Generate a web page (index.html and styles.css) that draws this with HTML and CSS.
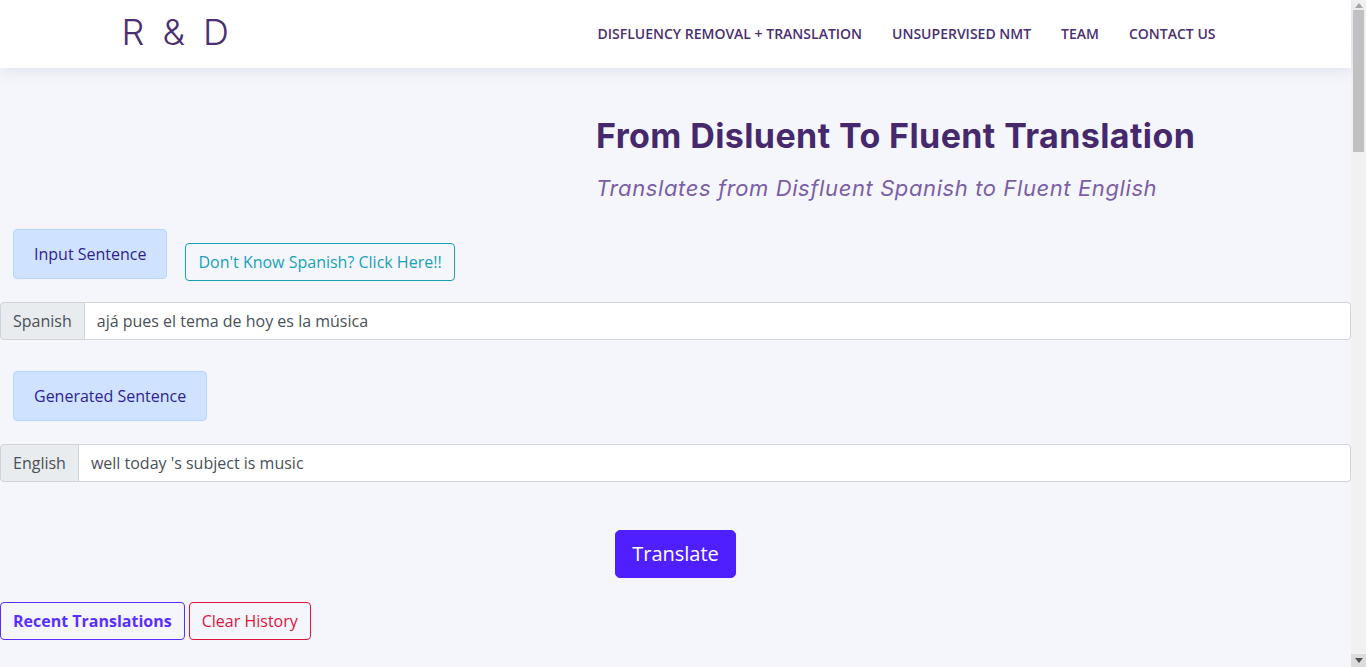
FILE: index.html
```html
<!DOCTYPE html>
<html lang="en">
<head>
<meta charset="utf-8">
<title>R &amp; D</title>
<link rel="stylesheet" href="styles.css">
</head>
<body>
<div class="app">
  <div class="site">
    <header class="topbar">
      <div class="topbar-inner">
        <a class="logo" href="#">R &amp; D</a>
        <nav class="nav">
          <a href="#">Disfluency Removal + Translation</a>
          <a href="#">Unsupervised NMT</a>
          <a href="#">Team</a>
          <a href="#">Contact Us</a>
        </nav>
      </div>
    </header>
    <main class="page">
      <section class="hero">
        <h1 class="hero-title">From Disluent To Fluent Translation</h1>
        <p class="hero-sub">Translates from Disfluent Spanish to Fluent English</p>
      </section>

      <div class="label-row">
        <span class="tag">Input Sentence</span>
        <button class="btn btn-info">Don't Know Spanish? Click Here!!</button>
      </div>
      <div class="input-group">
        <span class="prepend">Spanish</span>
        <input class="field" type="text" value="ajá pues el tema de hoy es la música">
      </div>

      <div class="label-row gen-row">
        <span class="tag">Generated Sentence</span>
      </div>
      <div class="input-group">
        <span class="prepend">English</span>
        <input class="field" type="text" value="well today 's subject is music">
      </div>

      <div class="translate-row">
        <button class="btn-translate">Translate</button>
      </div>

      <div class="history-bar">
        <button class="btn btn-recent">Recent Translations</button>
        <button class="btn btn-clear">Clear History</button>
      </div>
      <section class="history"></section>
    </main>
  </div>
  <div class="scrollbar" aria-hidden="true">
    <div class="sb-btn sb-up">
      <svg width="8" height="5" viewBox="0 0 8 5"><polygon points="4,0 8,5 0,5" fill="#a3a3a3"/></svg>
    </div>
    <div class="sb-track"><div class="sb-thumb"></div></div>
    <div class="sb-btn sb-down">
      <svg width="8" height="5" viewBox="0 0 8 5"><polygon points="0,0 8,0 4,5" fill="#505050"/></svg>
    </div>
  </div>
</div>
</body>
</html>
```

FILE: styles.css
```css
* { box-sizing: border-box; }
html, body { margin: 0; padding: 0; }
body {
  background: #f5f6fb;
  font-family: "Open Sans", "Liberation Sans", sans-serif;
  color: #495057;
}
.app { display: flex; align-items: flex-start; }
.site { flex: 1; min-width: 0; }

/* browser-like scrollbar */
.scrollbar {
  width: 15px;
  height: 100vh;
  position: sticky;
  top: 0;
  background: #f1f1f1;
  display: flex;
  flex-direction: column;
}
.sb-btn {
  height: 10px;
  display: flex;
  justify-content: center;
  align-items: center;
}
.sb-up { align-items: flex-start; padding-top: 3px; }
.sb-down { height: 13px; background: #dcdcdc; }
.sb-track { flex: 1; padding: 0 2px; }
.sb-thumb { height: 142px; background: #c1c1c1; }

.topbar {
  background: #fff;
  height: 68px;
  box-shadow: 0 2px 14px rgba(190, 195, 225, 0.45);
  position: relative;
  z-index: 2;
}
.topbar-inner {
  width: 1140px;
  margin: 0 auto;
  padding: 0 15px;
  height: 68px;
  display: flex;
  align-items: center;
  justify-content: space-between;
}
.logo {
  font-family: "Inter", "Lato", sans-serif;
  font-weight: 300;
  font-size: 36px;
  color: #4a2f72;
  text-decoration: none;
  word-spacing: 8px;
  margin-top: -5px;
  margin-left: 1px;
}
.nav { display: flex; margin-top: -1px; }
.nav a {
  padding: 0 15px;
  font-size: 14px;
  font-weight: 600;
  text-transform: uppercase;
  color: #4a2f72;
  text-decoration: none;
}
.hero { padding: 48px 0 0 596px; }
.hero-title {
  margin: 0;
  font-family: "Inter", "Lato", sans-serif;
  font-weight: 700;
  font-size: 34px;
  letter-spacing: 0.4px;
  line-height: 40px;
  color: #46286c;
}
.hero-sub {
  margin: 17px 0 0;
  font-family: "Inter", "Lato", sans-serif;
  font-style: italic;
  font-weight: 400;
  font-size: 22px;
  letter-spacing: 0.6px;
  line-height: 30px;
  color: #7a5ea6;
}
.label-row {
  display: flex;
  align-items: flex-start;
  gap: 18px;
  margin: 26px 0 0 13px;
}
.gen-row { margin-top: 31px; }
.tag {
  display: inline-block;
  background: #cfe2ff;
  border: 1px solid #b6d4fe;
  border-radius: 4px;
  color: #2f1f8f;
  font-size: 16px;
  line-height: 24px;
  padding: 12px 20px;
}
.btn {
  font-family: "Open Sans", "Liberation Sans", sans-serif;
  font-size: 16px;
  line-height: 24px;
  padding: 6px 12px;
  border-radius: 4px;
  background: transparent;
  cursor: pointer;
}
.btn-info {
  margin-top: 14px;
  border: 1px solid #17a2b8;
  color: #17a2b8;
}
.input-group {
  display: flex;
  margin-top: 21px;
  width: 100%;
  height: 38px;
}
.gen-row + .input-group { margin-top: 23px; }
.prepend {
  background: #e9ecef;
  border: 1px solid #ced4da;
  border-radius: 4px 0 0 4px;
  padding: 6px 12px;
  font-size: 16px;
  line-height: 24px;
  color: #495057;
}
.field {
  flex: 1;
  min-width: 0;
  border: 1px solid #ced4da;
  border-left: 0;
  border-radius: 0 4px 4px 0;
  background: #fff;
  padding: 6px 12px;
  font-family: "Open Sans", "Liberation Sans", sans-serif;
  font-size: 16px;
  line-height: 24px;
  color: #495057;
  outline: none;
}
.translate-row {
  display: flex;
  justify-content: center;
  width: 100%;
  margin-top: 48px;
}
.btn-translate {
  background: #4f1fff;
  color: #fff;
  border: 1px solid #4f1fff;
  border-radius: 5px;
  font-family: "Open Sans", "Liberation Sans", sans-serif;
  font-size: 20px;
  line-height: 30px;
  padding: 8px 16px;
}
.history-bar {
  display: flex;
  gap: 4px;
  margin-top: 24px;
}
.btn-recent {
  border: 1px solid #5a2eff;
  color: #5a2eff;
  font-weight: 700;
}
.btn-clear {
  border: 1px solid #dc143c;
  color: #dc143c;
}
.history { min-height: 2400px; }
```
